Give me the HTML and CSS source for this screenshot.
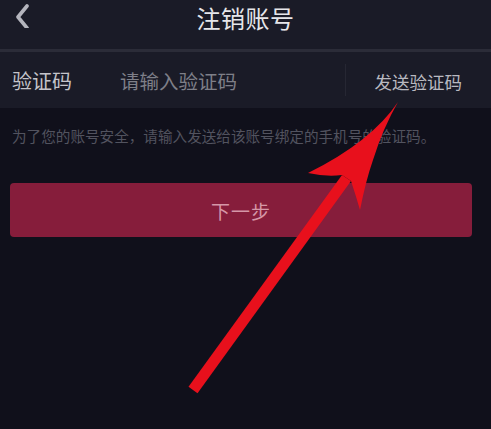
FILE: index.html
```html
<!DOCTYPE html>
<html lang="zh-CN">
<head>
<meta charset="utf-8">
<title>注销账号</title>
<link rel="stylesheet" href="styles.css">
</head>
<body>
<div class="page">
  <header class="topbar">
    <span class="back">
      <svg width="20" height="28" viewBox="0 0 20 28"><path d="M15 6 L6 17 L15 28" fill="none" stroke="#b4b5bd" stroke-width="3.6" stroke-linecap="round" stroke-linejoin="round"/></svg>
    </span>
    <h1 class="title">注销账号</h1>
    <span class="spacer"></span>
  </header>
  <div class="row">
    <span class="label">验证码</span>
    <span class="placeholder">请输入验证码</span>
    <span class="divider"></span>
    <span class="send">发送验证码</span>
  </div>
  <p class="hint">为了您的账号安全，请输入发送给该账号绑定的手机号的验证码。</p>
  <button class="next">下一步</button>
  <svg class="arrow" width="491" height="429" viewBox="0 0 491 429">
    <polygon points="188.5,386.8 197.5,393.2 351,181 342,175" fill="#e8101c"/>
    <path d="M398,102 Q371,142 308,173 Q326,177 342,175 L351,181 Q356,196 360,210 Q366,180 373,160 Q383,128 398,102 Z" fill="#e8101c"/>
  </svg>
</div>
</body>
</html>
```
FILE: styles.css
```css
* { box-sizing: border-box; }
html, body { margin: 0; padding: 0; }
body {
  background: #10101b;
  font-family: "Noto Sans CJK SC", "Noto Sans", sans-serif;
  width: 491px;
  height: 429px;
  overflow: hidden;
}
.page {
  position: relative;
  width: 491px;
  height: 429px;
  background: #10101b;
}
.topbar {
  height: 52px;
  background: #1a1b27;
  border-bottom: 3px solid #2b2c38;
  display: grid;
  grid-template-columns: 1fr auto 1fr;
  align-items: start;
}
.back {
  display: flex;
  padding-left: 12px;
  padding-top: 0;
}
.title {
  margin: 0;
  font-size: 24px;
  font-weight: normal;
  color: #e6e6ea;
  line-height: 36px;
  letter-spacing: 0.5px;
}
.row {
  height: 56px;
  background: #1a1b27;
  display: flex;
  align-items: center;
  padding-left: 12px;
}
.label {
  flex: none;
  width: 108px;
  font-size: 20px;
  color: #c4c4ca;
}
.placeholder {
  flex: 1;
  font-size: 19.5px;
  color: #7e7f88;
}
.divider {
  flex: none;
  width: 1px;
  height: 32px;
  background: #262733;
}
.send {
  flex: none;
  padding: 2px 29px 0 29px;
  font-size: 17.5px;
  color: #b9b9c0;
}
.hint {
  margin: 18px 0 0 12px;
  font-size: 14.6px;
  line-height: 20px;
  color: #52535f;
  white-space: nowrap;
}
.next {
  display: block;
  margin: 37px 0 0 10px;
  width: 462px;
  height: 54px;
  border: none;
  border-radius: 4px;
  background: #861d3b;
  color: #d597a7;
  font-family: "Noto Sans CJK SC", "Noto Sans", sans-serif;
  font-size: 19px;
  letter-spacing: 1px;
}
.arrow {
  position: absolute;
  left: 0;
  top: 0;
  pointer-events: none;
}
```
